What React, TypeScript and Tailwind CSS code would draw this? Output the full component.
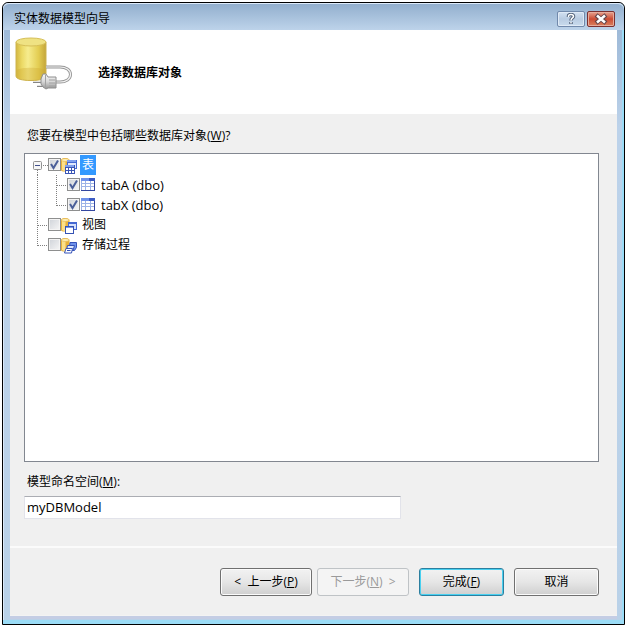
import { useState, type ReactNode } from "react";

type ObjectKind = "tables" | "views" | "procedures" | "table";

interface TreeNode {
  id: string;
  label: string;
  kind: ObjectKind;
  children?: TreeNode[];
}

const nodes: TreeNode[] = [
  {
    id: "tables",
    label: "表",
    kind: "tables",
    children: [
      { id: "tabA", label: "tabA (dbo)", kind: "table" },
      { id: "tabX", label: "tabX (dbo)", kind: "table" },
    ],
  },
  { id: "views", label: "视图", kind: "views" },
  { id: "procedures", label: "存储过程", kind: "procedures" },
];

function DatabasePlugIcon() {
  return (
    <svg width="58" height="54" viewBox="0 0 58 54" fill="none" aria-hidden="true">
      <defs>
        <linearGradient id="barrel" x1="0" x2="1" y1="0" y2="0">
          <stop offset="0" stopColor="#d3b740" />
          <stop offset="0.2" stopColor="#ecda66" />
          <stop offset="0.4" stopColor="#f6ec8e" />
          <stop offset="0.75" stopColor="#e3cd52" />
          <stop offset="1" stopColor="#c4a53a" />
        </linearGradient>
        <linearGradient id="plug" x1="0" x2="0" y1="0" y2="1">
          <stop offset="0" stopColor="#f7f7f7" />
          <stop offset="0.5" stopColor="#d8d8d8" />
          <stop offset="1" stopColor="#959595" />
        </linearGradient>
      </defs>
      <path d="M1 5v34c0 3 6 4.500 15 4.500S31 42 31 39V5z" fill="url(#barrel)" stroke="#cdb450" />
      <path d="M1.500 33c4-3 25-3 29 0v6c0 3-6 4.500-14.500 4.500S1.500 42 1.500 39z" fill="#cda834" opacity="0.35" />
      <ellipse cx="16" cy="5" rx="15" ry="4" fill="#efe283" stroke="#d6bf58" />
      <path d="M31 30h14c6 0 10.500 3 10.500 7.500S51 45 45 45h-5" stroke="#979797" strokeWidth="3" />
      <path d="M31 30h14c6 0 10.500 3 10.500 7.500S51 45 45 45h-5" stroke="#f2f2f2" strokeWidth="1.200" />
      <path d="M18 45h9M22 49h6" stroke="#858585" strokeWidth="2" />
      <path d="M18 44.500h9M22 48.500h6" stroke="#e4e4e4" strokeWidth="1" />
      <path d="M28 37h3l2 3h8v11h-8l-2 1-3-2-2-3v-5z" fill="url(#plug)" stroke="#8f8f8f" />
      <path d="M30.500 38v12M34 43h6M34 46h6M34 49h6" stroke="#a2a2a2" />
    </svg>
  );
}

function ObjectIcon({ kind }: { kind: ObjectKind }) {
  if (kind === "table") {
    return (
      <svg width="16" height="16" viewBox="0 0 16 16" className="mt-[2px] shrink-0" shapeRendering="crispEdges" aria-hidden="true">
        <path fill="#34479f" d="M1 1h14v13H1z" />
        <path fill="#6f92ea" d="M1 1h13v3H1z" />
        <path fill="#3c5cc4" d="M9 1h6v3H9z" />
        <path fill="#9db3e6" d="M1 4h13v9H1z" />
        <path fill="#fff" d="M2 4h3v2H2zM6 4h4v2H6zM11 4h3v2h-3zM2 7h3v2H2zM6 7h4v2H6zM11 7h3v2h-3zM2 10h3v3H2zM6 10h4v3H6zM11 10h3v3h-3z" />
      </svg>
    );
  }
  return (
    <svg width="16" height="16" viewBox="0 0 16 16" className="mt-[3px] shrink-0" aria-hidden="true">
      <path d="M0 2c0-1 1.500-2 4-2s4.500 1 4.500 2v10c0 1-2 1.500-4.500 1.500S0 13 0 12z" fill="#e8b23a" />
      <path d="M1 2.500h3.500V13C3 13 1 12.500 1 12z" fill="#fbe08a" />
      <ellipse cx="4.250" cy="2" rx="3.750" ry="1.500" fill="#fdeeb4" stroke="#dba93c" strokeWidth="0.500" />
      {kind === "tables" && (
        <g shapeRendering="crispEdges">
          <path fill="#4468d2" d="M6 2h10v9H6z" />
          <path fill="#7fa0ee" d="M6 2h9v2H6z" />
          <path fill="#dfe8fc" d="M7 5h8v5H7z" />
          <path fill="#3a55b4" d="M4 7h10v9H4z" />
          <path fill="#7fa0ee" d="M4 7h9v2H4z" />
          <path fill="#fff" d="M5 10h2v2H5zM8 10h2v2H8zM11 10h2v2h-2zM5 13h2v2H5zM8 13h2v2H8zM11 13h2v2h-2z" />
        </g>
      )}
      {kind === "views" && (
        <g shapeRendering="crispEdges">
          <path fill="#4468d2" d="M7 4h9v8H7z" />
          <path fill="#d5e1fb" d="M8 6h7v5H8z" />
          <path fill="#3552b4" d="M4 8h9v8H4z" />
          <path fill="#7898e6" d="M5 9h7v1H5z" />
          <path fill="#fff" d="M5 10h7v5H5z" />
        </g>
      )}
      {kind === "procedures" && (
        <g stroke="#3552b8">
          <path fill="#6f92ea" d="M9 4.500h6.500v5l-2 3H8z" />
          <path fill="#dce7fc" d="M6.500 7.500h7l-1.500 5H5.500z" />
          <path fill="#fff" d="M5 10.500h6.500l-1 4.500H3.500z" />
          <path d="M6 12.500h3.500" />
        </g>
      )}
    </svg>
  );
}

function RootGuide({ expandable, last }: { expandable: boolean; last: boolean }) {
  return (
    <svg width="23" height="20" viewBox="0 0 23 20" fill="none" className="shrink-0" aria-hidden="true">
      <g stroke="#808080" strokeDasharray="1 1">
        {expandable ? <path d="M12.500 15v5M18 10.500h5" /> : <path d={last ? "M12.500 0v11M13 10.500h10" : "M12.500 0v20M13 10.500h10"} />}
      </g>
      {expandable && (
        <>
          <rect x="8.500" y="6.500" width="8" height="8" rx="1" fill="#f7f7f7" stroke="#929292" />
          <path d="M10 10.500h5" stroke="#41508c" />
        </>
      )}
    </svg>
  );
}

function ChildGuide({ last }: { last: boolean }) {
  return (
    <svg width="42" height="20" viewBox="0 0 42 20" fill="none" className="shrink-0" aria-hidden="true">
      <g stroke="#808080" strokeDasharray="1 1">
        <path d="M12.500 0v20" />
        <path d={last ? "M31.500 0v11M32 10.500h10" : "M31.500 0v20M32 10.500h10"} />
      </g>
    </svg>
  );
}

interface NodeRowProps {
  node: TreeNode;
  guide: ReactNode;
  checked: boolean;
  selected?: boolean;
  onToggle: (id: string) => void;
}

function NodeRow({ node, guide, checked, selected, onToggle }: NodeRowProps) {
  return (
    <div className="flex h-5 items-start">
      {guide}
      <span className="mt-[3px] grid shrink-0">
        <input
          id={node.id}
          type="checkbox"
          checked={checked}
          onChange={() => onToggle(node.id)}
          className="peer col-start-1 row-start-1 size-[13px] appearance-none border border-[#8e8f8f] bg-linear-to-br from-[#cfd3d9] to-[#f6f6f6] shadow-[inset_0_0_0_1px_#f4f4f4]"
        />
        <svg
          viewBox="0 0 13 13"
          className="pointer-events-none invisible col-start-1 row-start-1 size-[13px] peer-checked:visible"
          aria-hidden="true"
        >
          <path d="M3 6l2.500 4L10 2.500" fill="none" stroke="#4b5f99" strokeWidth="2" />
        </svg>
      </span>
      <ObjectIcon kind={node.kind} />
      <label
        htmlFor={node.id}
        className={`flex h-5 items-center ${node.kind === "table" ? "ml-1 px-px text-[13px] leading-4" : "ml-[3px] px-[2px]"} ${selected ? "bg-[#3399ff] text-white" : ""}`}
      >
        {node.label}
      </label>
    </div>
  );
}

const buttonBase = "flex h-7 items-center justify-center rounded-[3px] border whitespace-pre";
const buttonNormal =
  "border-[#707070] bg-linear-to-b from-[#f2f2f2] via-[#e6e6e6] to-[#cfcfcf] shadow-[inset_0_0_0_1px_#fbfbfb]";

export default function App() {
  const [checked, setChecked] = useState<string[]>(["tables", "tabA", "tabX"]);
  const [namespace, setNamespace] = useState("myDBModel");

  const toggle = (id: string) =>
    setChecked((prev) => (prev.includes(id) ? prev.filter((item) => item !== id) : [...prev, id]));

  return (
    <div className="flex min-h-screen bg-white p-[2px] font-['Open_Sans','Noto_Sans_CJK_SC',sans-serif] text-xs leading-4 text-black">
      <div className="flex flex-1 flex-col rounded-t-md border border-black bg-linear-to-b from-[#96b3d3] via-[#bcd2ea] via-20% to-[#b9d1e8] shadow-[inset_-2px_-4px_0_#9bdcf6,inset_1px_1px_0_#dceafa]">
        {/* Title bar */}
        <header className="flex h-[27px] items-start justify-between rounded-t-md bg-linear-to-b from-[#91aecd] to-[#bdd3ea] pr-[9px] pl-[11px] shadow-[inset_0_1px_0_#dceafa]">
          <span className="pt-2">实体数据模型向导</span>
          <div className="flex gap-[2px] pt-2">
            <button
              type="button"
              aria-label="帮助"
              className="flex h-4 w-7 items-center justify-center rounded-xs border border-[#7189ab] bg-linear-to-b from-[#d3e1f1] via-[#b9cce2] to-[#c9dbed] shadow-[inset_0_0_0_1px_#dfeaf6]"
            >
              <svg width="10" height="12" viewBox="0 0 10 12" fill="none" aria-hidden="true">
                <path d="M2.500 4V3c0-2 5-2 5 .5C7.500 5 5 5 5 7.500M5 9v2" stroke="#53637b" strokeWidth="3.500" />
                <path d="M2.500 4V3c0-2 5-2 5 .5C7.500 5 5 5 5 7.500M5 9v1.500" stroke="#fff" strokeWidth="1.500" />
              </svg>
            </button>
            <button
              type="button"
              aria-label="关闭"
              className="flex h-4 w-7 items-center justify-center rounded-xs border border-[#7b3030] bg-linear-to-b from-[#e5a18f] via-[#cb4a32] to-[#d9805f] shadow-[inset_0_0_0_1px_#e7ac9c]"
            >
              <svg width="14" height="12" viewBox="0 0 14 12" fill="none" aria-hidden="true">
                <path d="M2 2l10 8M12 2L2 10" stroke="#634449" strokeWidth="4.500" />
                <path d="M3 2.500l8 7M11 2.500l-8 7" stroke="#fff" strokeWidth="2.500" />
              </svg>
            </button>
          </div>
        </header>

        <main className="mr-[7px] mb-2 ml-[7px] flex flex-1 flex-col bg-[#f0f0f0] shadow-[inset_0_-1px_0_#f3f3f3,0_3px_0_#c4cde4]">
          {/* Page heading */}
          <div className="flex h-21 items-start bg-white pt-[7px] pl-[5px]">
            <DatabasePlugIcon />
            <h1 className="pt-7 pl-[25px] font-bold">选择数据库对象</h1>
          </div>

          <div className="flex flex-1 flex-col pr-[18px] pb-[27px] pl-[14px]">
            <h2 id="objects-label" className="pt-3.5 pb-[9px] pl-[3px]">
              您要在模型中包括哪些数据库对象(<u className="underline-offset-1">W</u>)?
            </h2>
            <div
              role="group"
              aria-labelledby="objects-label"
              className="flex-1 border border-[#828790] bg-white pt-px"
            >
              <ul>
                {nodes.map((node, index) => (
                  <li key={node.id}>
                    <NodeRow
                      node={node}
                      guide={<RootGuide expandable={!!node.children} last={index === nodes.length - 1} />}
                      checked={checked.includes(node.id)}
                      selected={node.id === "tables"}
                      onToggle={toggle}
                    />
                    {node.children && (
                      <ul>
                        {node.children.map((child, childIndex) => (
                          <li key={child.id}>
                            <NodeRow
                              node={child}
                              guide={<ChildGuide last={childIndex === node.children!.length - 1} />}
                              checked={checked.includes(child.id)}
                              onToggle={toggle}
                            />
                          </li>
                        ))}
                      </ul>
                    )}
                  </li>
                ))}
              </ul>
            </div>

            <label htmlFor="namespace" className="pt-3 pb-1.5 pl-[3px]">
              模型命名空间(<u className="underline-offset-1">M</u>):
            </label>
            <input
              id="namespace"
              value={namespace}
              onChange={(e) => setNamespace(e.target.value)}
              className="h-[23px] w-[377px] max-w-full border border-[#e2e3ea] border-t-[#abadb3] bg-white px-[2px] pb-[2px] text-[13px] outline-none"
            />
          </div>

          {/* Wizard buttons */}
          <footer className="flex justify-end border-t-2 border-[#fbfbfb] pt-5 pr-[18px] pb-5">
            <button type="button" className={`${buttonBase} ${buttonNormal} w-[92px]`}>
              {"<  "}上一步(<u className="underline-offset-1">P</u>)
            </button>
            <button
              type="button"
              disabled
              className={`${buttonBase} ml-[5px] w-[92px] border-[#bfc3c6] bg-[#f4f4f4] text-[#9a9a9a]`}
            >
              下一步(<u className="underline-offset-1">N</u>){"  >"}
            </button>
            <button
              type="button"
              className={`${buttonBase} ml-[10px] w-[85px] border-[#2c7f9f] bg-linear-to-b from-[#f2f2f2] via-[#e6e6e6] to-[#cfcfcf] shadow-[inset_0_0_0_1px_#48d0f0]`}
            >
              完成(<u className="underline-offset-1">F</u>)
            </button>
            <button type="button" className={`${buttonBase} ${buttonNormal} ml-[10px] w-[85px]`}>
              取消
            </button>
          </footer>
        </main>
      </div>
    </div>
  );
}
